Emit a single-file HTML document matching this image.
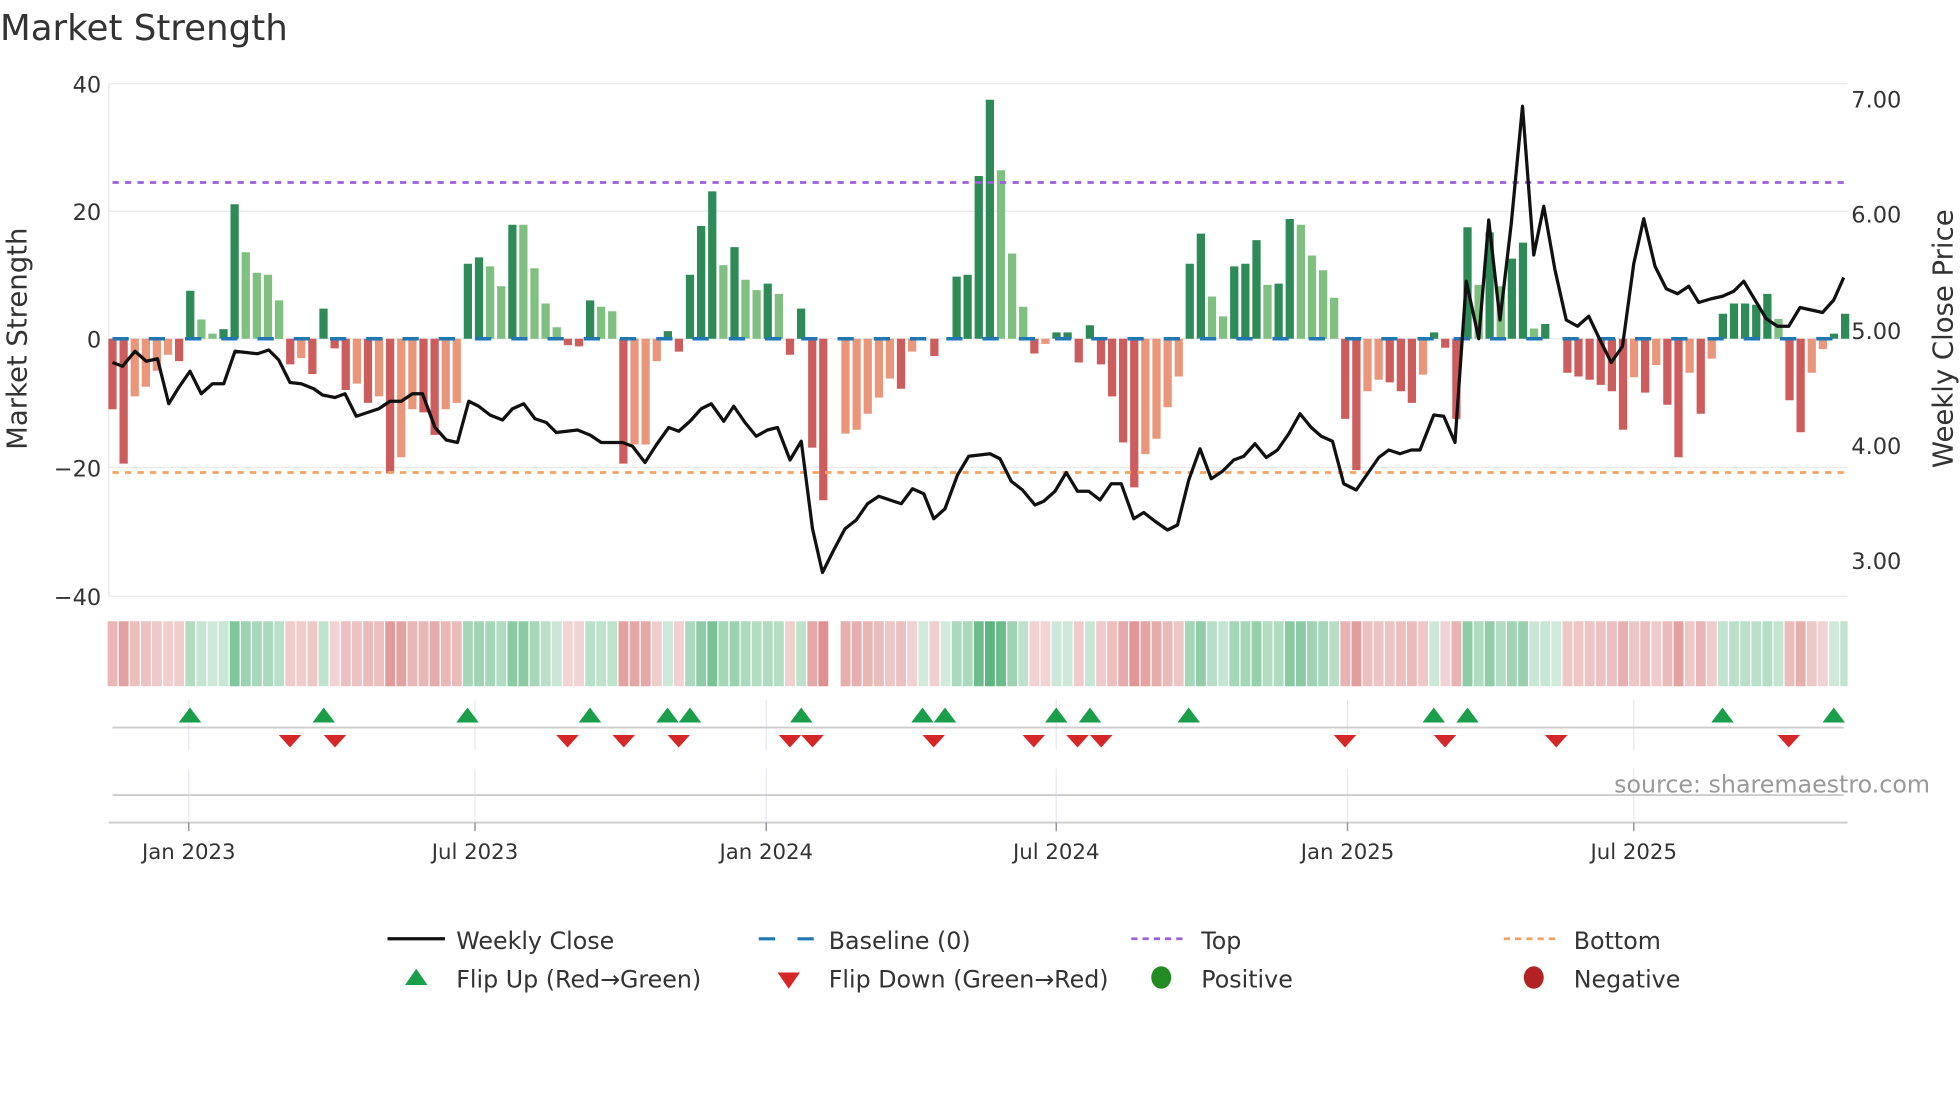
<!DOCTYPE html>
<html><head><meta charset="utf-8">
<style>
html,body{margin:0;padding:0;background:#fff;}
svg{display:block;}
text{font-family:"DejaVu Sans","Liberation Sans",sans-serif;fill:#333;}
</style></head>
<body>
<svg id="s" width="1960" height="1102" viewBox="0 0 1568 881.6" xmlns="http://www.w3.org/2000/svg">
<text x="0" y="32" font-size="28.5">Market Strength</text>
<g stroke="#ececec" stroke-width="1.2">
<line x1="87" y1="67" x2="1478" y2="67"/>
<line x1="87" y1="169" x2="1478" y2="169"/>
<line x1="87" y1="271" x2="1478" y2="271"/>
<line x1="87" y1="374" x2="1478" y2="374"/>
<line x1="87" y1="477" x2="1478" y2="477"/>
<line x1="87" y1="67" x2="87" y2="477"/>
</g>
<g font-size="18" text-anchor="end">
<text x="81" y="74">40</text>
<text x="81" y="176">20</text>
<text x="81" y="278">0</text>
<text x="81" y="381">−20</text>
<text x="81" y="484">−40</text>
</g>
<g font-size="18">
<text x="1481" y="86">7.00</text>
<text x="1481" y="178">6.00</text>
<text x="1481" y="271">5.00</text>
<text x="1481" y="363">4.00</text>
<text x="1481" y="455">3.00</text>
</g>
<text transform="translate(21,271) rotate(-90)" font-size="22" text-anchor="middle">Market Strength</text>
<text transform="translate(1562,271) rotate(-90)" font-size="22" text-anchor="middle">Weekly Close Price</text>
<g id="bars"></g>
<line x1="90" y1="146" x2="1476" y2="146" stroke="#9b5fe0" stroke-width="2.2" stroke-dasharray="5 5"/>
<line x1="90" y1="378" x2="1476" y2="378" stroke="#f4a261" stroke-width="2.2" stroke-dasharray="5 5"/>
<line x1="90" y1="271" x2="1476" y2="271" stroke="#1f77b4" stroke-width="2.8" stroke-dasharray="13 16"/>
<polyline id="price" fill="none" stroke="#111" stroke-width="2.6" stroke-linejoin="round" points=""/>
<g id="heat"></g>
<g stroke="#e6e9ef" stroke-width="1">
<line x1="151" y1="560" x2="151" y2="600"/><line x1="151" y1="615" x2="151" y2="658"/>
<line x1="380" y1="560" x2="380" y2="600"/><line x1="380" y1="615" x2="380" y2="658"/>
<line x1="613" y1="560" x2="613" y2="600"/><line x1="613" y1="615" x2="613" y2="658"/>
<line x1="845" y1="560" x2="845" y2="600"/><line x1="845" y1="615" x2="845" y2="658"/>
<line x1="1078" y1="560" x2="1078" y2="600"/><line x1="1078" y1="615" x2="1078" y2="658"/>
<line x1="1307" y1="560" x2="1307" y2="600"/><line x1="1307" y1="615" x2="1307" y2="658"/>
</g>
<line x1="90" y1="582" x2="1475" y2="582" stroke="#ccc" stroke-width="1.5"/>
<line x1="90" y1="636" x2="1475" y2="636" stroke="#ccc" stroke-width="1.5"/>
<line x1="87" y1="658" x2="1478" y2="658" stroke="#ccc" stroke-width="1.5"/>
<g stroke="#999" stroke-width="1.2">
<line x1="151" y1="658" x2="151" y2="665"/><line x1="380" y1="658" x2="380" y2="665"/><line x1="613" y1="658" x2="613" y2="665"/>
<line x1="845" y1="658" x2="845" y2="665"/><line x1="1078" y1="658" x2="1078" y2="665"/><line x1="1307" y1="658" x2="1307" y2="665"/>
</g>
<g id="flips"></g>
<text x="1544" y="634" font-size="19" text-anchor="end" style="fill:#999">source: sharemaestro.com</text>
<g font-size="17" text-anchor="middle">
<text x="151" y="687">Jan 2023</text><text x="380" y="687">Jul 2023</text><text x="613" y="687">Jan 2024</text>
<text x="845" y="687">Jul 2024</text><text x="1078" y="687">Jan 2025</text><text x="1307" y="687">Jul 2025</text>
</g>
<g font-size="19">
<line x1="310" y1="751" x2="356" y2="751" stroke="#111" stroke-width="2.6"/>
<text x="365" y="759">Weekly Close</text>
<line x1="607" y1="751" x2="652" y2="751" stroke="#1f77b4" stroke-width="2.5" stroke-dasharray="13 18"/>
<text x="663" y="759">Baseline (0)</text>
<line x1="905" y1="751" x2="949" y2="751" stroke="#9b5fe0" stroke-width="2.2" stroke-dasharray="5 4"/>
<text x="961" y="759">Top</text>
<line x1="1203" y1="751" x2="1247" y2="751" stroke="#f4a261" stroke-width="2.2" stroke-dasharray="5 4"/>
<text x="1259" y="759">Bottom</text>
<polygon points="324,788 342,788 333,775" fill="#1a9e4a"/>
<text x="365" y="790">Flip Up (Red→Green)</text>
<polygon points="622,778 640,778 631,791" fill="#d62728"/>
<text x="663" y="790">Flip Down (Green→Red)</text>
<ellipse cx="929" cy="782" rx="8" ry="9" fill="#228b22"/>
<text x="961" y="790">Positive</text>
<ellipse cx="1227" cy="782" rx="8" ry="9" fill="#b22222"/>
<text x="1259" y="790">Negative</text>
</g>
</svg>
<script>
var NS="http://www.w3.org/2000/svg";
function el(t,a,p){var e=document.createElementNS(NS,t);for(var k in a)e.setAttribute(k,a[k]);document.getElementById(p).appendChild(e);}
var B=[[-11,1],[-19.5,1],[-9,0],[-7.5,0],[-5,0],[-2.5,0],[-3.5,1],[7.5,1],[3,0],[0.8,0],[1.5,1],[21,1],[13.5,0],[10.3,0],[10,0],[6,0],[-4,1],[-3,0],[-5.5,1],[4.7,1],[-1.5,1],[-8,1],[-7,0],[-10,1],[-9,0],[-21,1],[-18.5,0],[-11,0],[-11.5,1],[-15,1],[-11,0],[-10,0],[11.7,1],[12.7,1],[11.3,0],[8.2,0],[17.8,1],[17.8,0],[11,0],[5.5,0],[1.8,0],[-1,1],[-1.2,1],[6,1],[5,0],[4.3,0],[-19.5,1],[-16.5,0],[-16.5,0],[-3.5,0],[1.2,1],[-2,1],[10,1],[17.6,1],[23,1],[11.5,0],[14.3,1],[9.2,0],[7.6,0],[8.6,1],[7,0],[-2.5,1],[4.7,1],[-17,1],[-25.2,1],[0,0],[-14.8,0],[-14.2,0],[-11.7,0],[-9.2,0],[-6.2,0],[-7.8,1],[-2,0],[0,0],[-2.7,1],[0,0],[9.7,1],[10,1],[25.4,1],[37.3,1],[26.3,0],[13.3,0],[5,0],[-2.3,1],[-0.8,0],[1,1],[1,1],[-3.7,1],[2.1,1],[-4,1],[-9,1],[-16.2,1],[-23.2,1],[-18,0],[-15.6,0],[-10.7,0],[-5.9,0],[11.7,1],[16.4,1],[6.6,0],[3.5,0],[11.3,1],[11.7,1],[15.4,1],[8.4,0],[8.6,1],[18.7,1],[17.8,0],[13,0],[10.7,0],[6.4,0],[-12.5,1],[-20.5,1],[-8.2,0],[-6.4,0],[-6.8,1],[-8.2,1],[-10,1],[-5.6,0],[1,1],[-1.4,1],[-12.5,1],[17.4,1],[8.4,0],[16.6,1],[8.2,0],[12.5,1],[15,1],[1.6,0],[2.3,1],[0,0],[-5.3,1],[-5.9,1],[-6.4,1],[-7.2,1],[-8.2,1],[-14.2,1],[-6,0],[-8.4,1],[-4.1,0],[-10.3,1],[-18.5,1],[-5.3,0],[-11.7,1],[-3.1,0],[3.9,1],[5.5,1],[5.5,1],[5.3,1],[7,1],[3.1,0],[-9.6,1],[-14.6,1],[-5.3,0],[-1.6,0],[0.8,1],[3.9,1]];
var step=8.885;
for(var i=0;i<B.length;i++){
 var v=B[i][0],d=B[i][1],cx=90+step*i,h=Math.abs(v)*5.125;
 if(h>0){var c=v>0?(d?"#2e8b57":"#7fbf7f"):(d?"#cd5c5c":"#e9967a");
  el("rect",{x:(cx-3.3).toFixed(1),y:(v>0?271-h:271).toFixed(1),width:6.6,height:h.toFixed(1),fill:c},"bars");}
 if(i==65) continue;
 var a=Math.min(Math.abs(v)/30,1), col;
 if(v>=0){col="rgba(44,160,90,"+(0.22+0.55*a).toFixed(2)+")";}
 else {col="rgba(200,70,70,"+(0.22+0.45*a).toFixed(2)+")";}
 var w=(i==B.length-1)?step-3:step-1;
 el("rect",{x:(cx-4.4+0.5).toFixed(1),y:497,width:w.toFixed(2),height:52,fill:col},"heat");
}
var P="90,290 98,293 108,281 117,289 126,287 135,323 143,310 152,297 161,315 170,307 179,307 188,281 197,282 206,283 215,280 223,288 232,306 241,307 251,311 258,316 268,318 276,315 285,333 294,330 303,327 312,321 321,321 330,315 338,315 348,342 357,352 366,354 375,321 383,325 392,332 402,336 410,327 419,323 428,335 437,338 445,346 462,344 472,348 481,354 498,354 506,357 516,370 525,356 535,342 543,345 552,337 561,327 569,323 579,337 587,325 596,338 605,349 614,344 622,342 632,368 641,353 650,423 658,458 667,440 676,423 685,416 694,403 703,397 721,403 730,391 739,395 747,415 756,407 766,380 775,365 792,363 800,367 809,385 818,392 828,404 835,401 844,393 853,378 862,393 871,393 880,400 889,387 897,387 907,415 915,410 924,417 934,424 942,420 951,384 960,359 969,383 978,377 987,368 995,365 1004,355 1013,366 1022,360 1031,347 1040,331 1049,342 1057,349 1066,353 1075,387 1085,392 1094,379 1103,366 1111,360 1120,363 1129,360 1136,360 1147,332 1155,333 1164,354 1173,225 1183,271 1191,176 1200,256 1209,179 1218,85 1227,204 1235,165 1244,216 1253,256 1262,261 1271,253 1280,272 1289,290 1298,277 1307,211 1315,175 1324,213 1333,231 1342,235 1351,229 1359,242 1369,239 1378,237 1387,233 1395,225 1404,240 1413,255 1422,261 1431,261 1440,246 1458,250 1467,240 1475,222";
document.getElementById("price").setAttribute("points",P);
var up=[152,259,374,472,534,552,641,738,756,845,872,951,1147,1174,1378,1467];
var dn=[232,268,454,499,543,632,650,747,827,862,881,1076,1156,1245,1431];
up.forEach(function(x){el("polygon",{points:(x-9)+",578 "+(x+9)+",578 "+x+",566",fill:"#1a9e4a"},"flips");});
dn.forEach(function(x){el("polygon",{points:(x-9)+",588 "+(x+9)+",588 "+x+",598",fill:"#d62728"},"flips");});
</script>
</body></html>
